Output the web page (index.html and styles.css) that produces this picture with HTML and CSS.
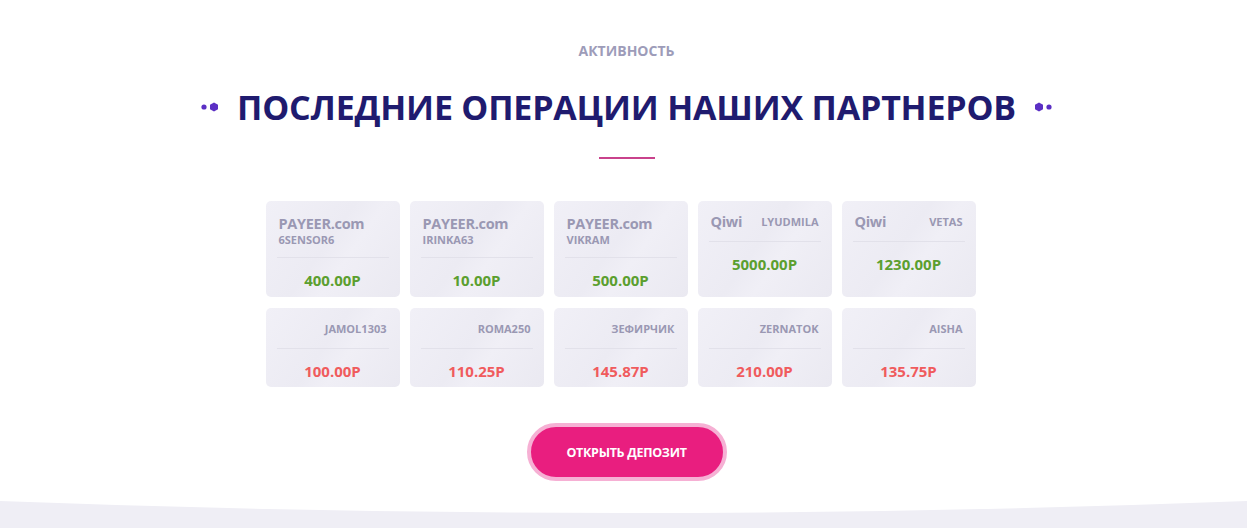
FILE: index.html
```html
<!DOCTYPE html>
<html lang="ru">
<head>
    <meta charset="UTF-8">
    <meta name="viewport" content="width=device-width, initial-scale=1.0">
    <title>Активность</title>
    <link rel="stylesheet" href="styles.css">
</head>
<body>
    <section class="activity">
        <p class="eyebrow">Активность</p>

        <h2 class="title">
            <svg class="dots" width="20" height="12" viewBox="0 0 20 12">
                <circle cx="3" cy="6" r="2.6" fill="#5b2fc4"/>
                <polygon points="13,1.5 17,3.8 17,8.2 13,10.5 9,8.2 9,3.8" fill="#5b2fc4"/>
            </svg>
            <span>Последние операции наших партнеров</span>
            <svg class="dots" width="20" height="12" viewBox="0 0 20 12">
                <polygon points="7,1.5 11,3.8 11,8.2 7,10.5 3,8.2 3,3.8" fill="#5b2fc4"/>
                <circle cx="17" cy="6" r="2.6" fill="#5b2fc4"/>
            </svg>
        </h2>

        <span class="underline"></span>

        <div class="ops">
            <div class="op">
                <div class="op-head stacked">
                    <span class="system">PAYEER.com</span>
                    <span class="login">6SENSOR6</span>
                </div>
                <div class="amount in">400.00P</div>
            </div>
            <div class="op">
                <div class="op-head stacked">
                    <span class="system">PAYEER.com</span>
                    <span class="login">IRINKA63</span>
                </div>
                <div class="amount in">10.00P</div>
            </div>
            <div class="op">
                <div class="op-head stacked">
                    <span class="system">PAYEER.com</span>
                    <span class="login">VIKRAM</span>
                </div>
                <div class="amount in">500.00P</div>
            </div>
            <div class="op">
                <div class="op-head">
                    <span class="system">Qiwi</span>
                    <span class="login">LYUDMILA</span>
                </div>
                <div class="amount in">5000.00P</div>
            </div>
            <div class="op">
                <div class="op-head">
                    <span class="system">Qiwi</span>
                    <span class="login">VETAS</span>
                </div>
                <div class="amount in">1230.00P</div>
            </div>

            <div class="op">
                <div class="op-head">
                    <span class="system"></span>
                    <span class="login">JAMOL1303</span>
                </div>
                <div class="amount out">100.00P</div>
            </div>
            <div class="op">
                <div class="op-head">
                    <span class="system"></span>
                    <span class="login">ROMA250</span>
                </div>
                <div class="amount out">110.25P</div>
            </div>
            <div class="op">
                <div class="op-head">
                    <span class="system"></span>
                    <span class="login">ЗЕФИРЧИК</span>
                </div>
                <div class="amount out">145.87P</div>
            </div>
            <div class="op">
                <div class="op-head">
                    <span class="system"></span>
                    <span class="login">ZERNATOK</span>
                </div>
                <div class="amount out">210.00P</div>
            </div>
            <div class="op">
                <div class="op-head">
                    <span class="system"></span>
                    <span class="login">AISHA</span>
                </div>
                <div class="amount out">135.75P</div>
            </div>
        </div>

        <a href="#" class="btn">Открыть депозит</a>
    </section>

    <svg class="wave" viewBox="0 0 1247 31" preserveAspectRatio="none">
        <rect width="1247" height="31" fill="#efeef5"/>
        <path d="M0 0 H1247 V3 Q623.5 27 0 3 Z" fill="#fff"/>
    </svg>
</body>
</html>
```

FILE: styles.css
```css
body {
    margin: 0;
    background-color: #fff;
    font-family: "Open Sans", "Noto Sans", sans-serif;
    overflow: hidden;
}
.activity {
    display: flex;
    flex-direction: column;
    align-items: center;
    padding: 42px 0 0 6px;
}
.eyebrow {
    margin: 0;
    font-size: 14px;
    line-height: 18px;
    font-weight: 700;
    text-transform: uppercase;
    color: #9d9cb9;
}
.title {
    display: flex;
    align-items: center;
    gap: 16px;
    margin: 26px 0 0;
    font-size: 34px;
    line-height: 42px;
    font-weight: 700;
    text-transform: uppercase;
    color: #1f1b6f;
    letter-spacing: -0.2px;
}
.dots {
    display: block;
}
.underline {
    display: block;
    width: 56px;
    height: 2px;
    margin-top: 29px;
    background-color: #c9428c;
}
.ops {
    display: grid;
    grid-template-columns: repeat(5, 134px);
    grid-template-rows: 96px 79px;
    column-gap: 10px;
    row-gap: 11px;
    margin: 42px 0 0 -12px;
}
.op {
    display: flex;
    flex-direction: column;
    padding: 0 11px;
    border-radius: 5px;
    background: linear-gradient(125deg, #f1f0f7 0%, #ecebf3 45%, #f0eff6 60%, #eae9f1 100%);
    color: #9a98b3;
}
.op-head {
    display: flex;
    justify-content: space-between;
    align-items: center;
    height: 41px;
    padding: 2px 2px 0;
    box-sizing: border-box;
    border-bottom: 1px solid #e2e1ea;
}
.op-head.stacked {
    flex-direction: column;
    align-items: flex-start;
    justify-content: flex-start;
    height: 57px;
    padding-top: 14px;
}
.system {
    font-size: 14.5px;
    line-height: 18px;
    font-weight: 700;
    letter-spacing: -0.3px;
}
.login {
    font-size: 11px;
    line-height: 14px;
    font-weight: 700;
    text-transform: uppercase;
}
.amount {
    padding-top: 12px;
    font-size: 15px;
    line-height: 20px;
    font-weight: 700;
    text-align: center;
}
.amount.in {
    color: #5b9f2f;
}
.amount.out {
    color: #f05b5d;
}
.btn {
    display: flex;
    align-items: center;
    justify-content: center;
    width: 192px;
    height: 50px;
    margin-top: 36px;
    border: 4px solid #f6b0d4;
    border-radius: 30px;
    background-color: #e91e7f;
    color: #fff;
    font-size: 12.5px;
    font-weight: 700;
    text-transform: uppercase;
    text-decoration: none;
    letter-spacing: -0.3px;
}
.wave {
    display: block;
    width: 100%;
    height: 31px;
    margin-top: 17px;
}
```
